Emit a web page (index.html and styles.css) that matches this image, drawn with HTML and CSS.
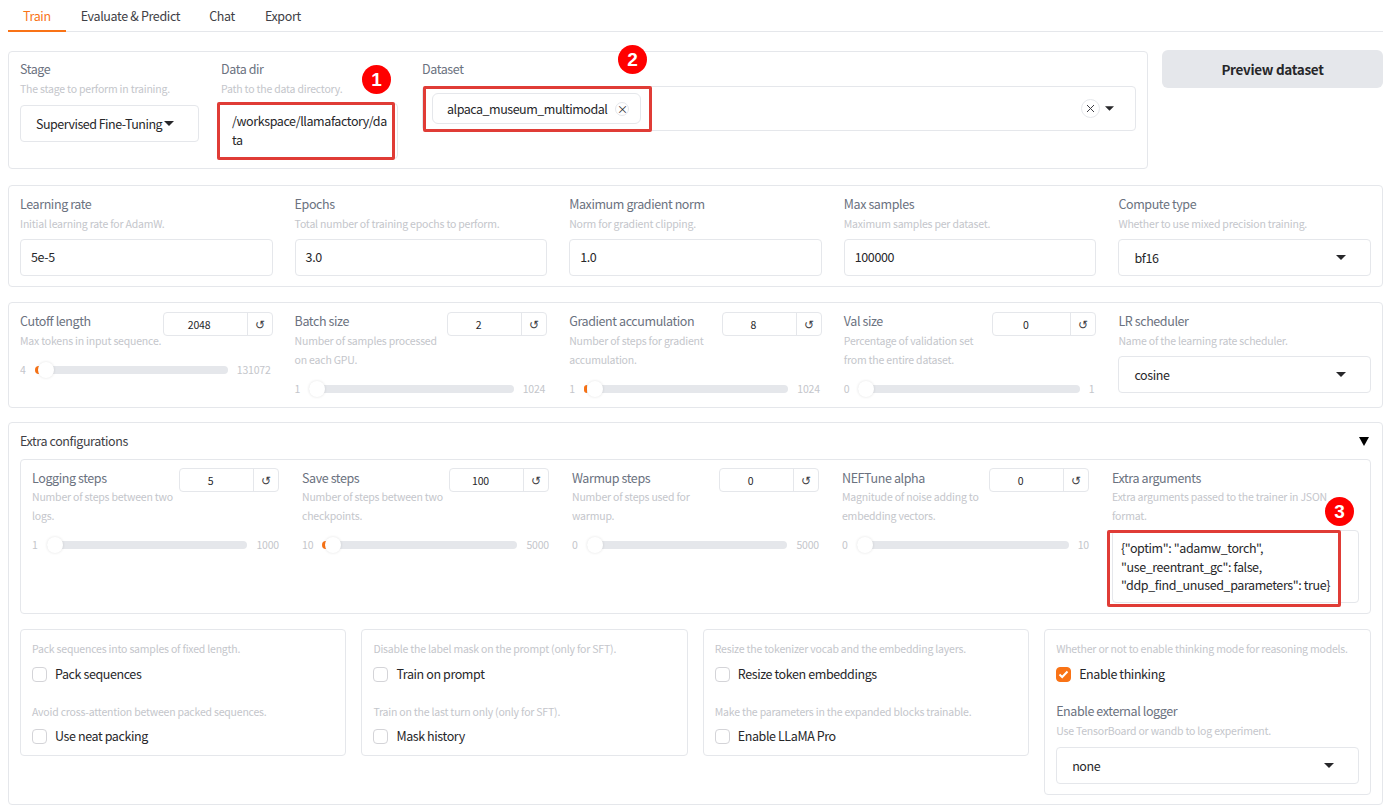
FILE: index.html
```html
<!DOCTYPE html>
<html lang="en">
  <head>
    <meta charset="UTF-8" />
    <meta name="viewport" content="width=device-width, initial-scale=1.0" />
    <title>LLaMA Factory</title>
    <link rel="stylesheet" href="styles.css">
  </head>
  <body>
    <div class="page">
      <nav class="tabs">
        <a class="tab active">Train</a>
        <a class="tab">Evaluate &amp; Predict</a>
        <a class="tab">Chat</a>
        <a class="tab">Export</a>
      </nav>

      <div class="top-row">
        <section class="panel top-panel">
          <div class="field stage-field">
            <label>Stage</label>
            <p class="info">The stage to perform in training.</p>
            <div class="box select stage-select">
              <span>Supervised Fine-Tuning</span>
              <svg class="caret" width="10" height="5" viewBox="0 0 10 5"><polygon points="0,0 10,0 5,5" /></svg>
            </div>
          </div>
          <div class="field dir-field">
            <label>Data dir</label>
            <p class="info">Path to the data directory.</p>
            <div class="box dir-box">/workspace/llamafactory/data</div>
          </div>
          <div class="field dataset-field">
            <label>Dataset</label>
            <div class="box dataset-box">
              <span class="chip">alpaca_museum_multimodal <i class="chip-x">×</i></span>
              <span class="clear-x">
                <svg width="9" height="9" viewBox="0 0 9 9"><path d="M1 1 L8 8 M8 1 L1 8" fill="none" stroke="#3f3f46" stroke-width="1" /></svg>
              </span>
              <svg class="caret" width="9" height="5" viewBox="0 0 10 5"><polygon points="0,0 10,0 5,5" /></svg>
            </div>
          </div>
        </section>
        <button class="preview-btn">Preview dataset</button>
      </div>

      <section class="panel five-cols row-two">
        <div class="field">
          <label>Learning rate</label>
          <p class="info">Initial learning rate for AdamW.</p>
          <div class="box text-box">5e-5</div>
        </div>
        <div class="field">
          <label>Epochs</label>
          <p class="info">Total number of training epochs to perform.</p>
          <div class="box text-box">3.0</div>
        </div>
        <div class="field">
          <label>Maximum gradient norm</label>
          <p class="info">Norm for gradient clipping.</p>
          <div class="box text-box">1.0</div>
        </div>
        <div class="field">
          <label>Max samples</label>
          <p class="info">Maximum samples per dataset.</p>
          <div class="box text-box">100000</div>
        </div>
        <div class="field">
          <label>Compute type</label>
          <p class="info">Whether to use mixed precision training.</p>
          <div class="box text-box select">
            <span>bf16</span>
            <svg class="caret" width="10" height="5" viewBox="0 0 10 5"><polygon points="0,0 10,0 5,5" /></svg>
          </div>
        </div>
      </section>

      <section class="panel five-cols row-three">
        <div class="field">
          <div class="slider-head">
            <div class="nowrap">
              <label>Cutoff length</label>
              <p class="info">Max tokens in input sequence.</p>
            </div>
            <div class="num num-wide"><span class="num-val">2048</span><span class="num-reset">↺</span></div>
          </div>
          <div class="slider">
            <span class="min">4</span>
            <div class="track"><b class="fill"></b><b class="thumb"></b></div>
            <span class="max">131072</span>
          </div>
        </div>
        <div class="field">
          <div class="slider-head">
            <div>
              <label>Batch size</label>
              <p class="info">Number of samples processed on each GPU.</p>
            </div>
            <div class="num"><span class="num-val">2</span><span class="num-reset">↺</span></div>
          </div>
          <div class="slider">
            <span class="min">1</span>
            <div class="track"><b class="thumb"></b></div>
            <span class="max">1024</span>
          </div>
        </div>
        <div class="field">
          <div class="slider-head">
            <div>
              <label>Gradient accumulation</label>
              <p class="info">Number of steps for gradient accumulation.</p>
            </div>
            <div class="num"><span class="num-val">8</span><span class="num-reset">↺</span></div>
          </div>
          <div class="slider">
            <span class="min">1</span>
            <div class="track"><b class="fill thin"></b><b class="thumb"></b></div>
            <span class="max">1024</span>
          </div>
        </div>
        <div class="field">
          <div class="slider-head">
            <div>
              <label>Val size</label>
              <p class="info">Percentage of validation set from the entire dataset.</p>
            </div>
            <div class="num num-mid"><span class="num-val">0</span><span class="num-reset">↺</span></div>
          </div>
          <div class="slider">
            <span class="min">0</span>
            <div class="track"><b class="thumb"></b></div>
            <span class="max">1</span>
          </div>
        </div>
        <div class="field">
          <label>LR scheduler</label>
          <p class="info">Name of the learning rate scheduler.</p>
          <div class="box text-box select">
            <span>cosine</span>
            <svg class="caret" width="10" height="5" viewBox="0 0 10 5"><polygon points="0,0 10,0 5,5" /></svg>
          </div>
        </div>
      </section>

      <section class="panel extra-panel">
        <div class="extra-head">
          <span>Extra configurations</span>
          <svg width="10" height="9" viewBox="0 0 10 9"><polygon points="0,0 10,0 5,9" /></svg>
        </div>
        <div class="inner five-inner">
          <div class="field">
            <div class="slider-head">
              <div>
                <label>Logging steps</label>
                <p class="info">Number of steps between two logs.</p>
              </div>
              <div class="num"><span class="num-val">5</span><span class="num-reset">↺</span></div>
            </div>
            <div class="slider">
              <span class="min">1</span>
              <div class="track"><b class="thumb"></b></div>
              <span class="max">1000</span>
            </div>
          </div>
          <div class="field">
            <div class="slider-head">
              <div>
                <label>Save steps</label>
                <p class="info">Number of steps between two checkpoints.</p>
              </div>
              <div class="num"><span class="num-val">100</span><span class="num-reset">↺</span></div>
            </div>
            <div class="slider">
              <span class="min">10</span>
              <div class="track"><b class="fill"></b><b class="thumb"></b></div>
              <span class="max">5000</span>
            </div>
          </div>
          <div class="field">
            <div class="slider-head">
              <div>
                <label>Warmup steps</label>
                <p class="info">Number of steps used for warmup.</p>
              </div>
              <div class="num"><span class="num-val">0</span><span class="num-reset">↺</span></div>
            </div>
            <div class="slider">
              <span class="min">0</span>
              <div class="track"><b class="thumb"></b></div>
              <span class="max">5000</span>
            </div>
          </div>
          <div class="field">
            <div class="slider-head">
              <div>
                <label>NEFTune alpha</label>
                <p class="info">Magnitude of noise adding to embedding vectors.</p>
              </div>
              <div class="num"><span class="num-val">0</span><span class="num-reset">↺</span></div>
            </div>
            <div class="slider">
              <span class="min">0</span>
              <div class="track"><b class="thumb"></b></div>
              <span class="max">10</span>
            </div>
          </div>
          <div class="field">
            <label>Extra arguments</label>
            <p class="info">Extra arguments passed to the trainer in JSON format.</p>
            <div class="box args-box">{"optim": "adamw_torch",<br>"use_reentrant_gc": false,<br>"ddp_find_unused_parameters": true}</div>
          </div>
        </div>

        <div class="check-row">
          <div class="inner check-group">
            <p class="info">Pack sequences into samples of fixed length.</p>
            <div class="check"><span class="tick"></span>Pack sequences</div>
            <p class="info second">Avoid cross-attention between packed sequences.</p>
            <div class="check last"><span class="tick"></span>Use neat packing</div>
          </div>
          <div class="inner check-group">
            <p class="info">Disable the label mask on the prompt (only for SFT).</p>
            <div class="check"><span class="tick"></span>Train on prompt</div>
            <p class="info second">Train on the last turn only (only for SFT).</p>
            <div class="check last"><span class="tick"></span>Mask history</div>
          </div>
          <div class="inner check-group">
            <p class="info">Resize the tokenizer vocab and the embedding layers.</p>
            <div class="check"><span class="tick"></span>Resize token embeddings</div>
            <p class="info second">Make the parameters in the expanded blocks trainable.</p>
            <div class="check last"><span class="tick"></span>Enable LLaMA Pro</div>
          </div>
          <div class="inner check-group">
            <p class="info">Whether or not to enable thinking mode for reasoning models.</p>
            <div class="check">
              <span class="tick on">
                <svg width="11" height="9" viewBox="0 0 11 9"><path d="M1.5 4.5 L4.2 7 L9.5 1.5" fill="none" stroke="#fff" stroke-width="2" /></svg>
              </span>Enable thinking
            </div>
            <label class="logger-label">Enable external logger</label>
            <p class="info">Use TensorBoard or wandb to log experiment.</p>
            <div class="box text-box select logger-select">
              <span>none</span>
              <svg class="caret" width="10" height="5" viewBox="0 0 10 5"><polygon points="0,0 10,0 5,5" /></svg>
            </div>
          </div>
        </div>
      </section>

      <!-- red callouts drawn over the form -->
      <div class="mark mark-1"></div>
      <div class="mark mark-2"></div>
      <div class="mark mark-3"></div>
      <span class="badge badge-1">1</span>
      <span class="badge badge-2">2</span>
      <span class="badge badge-3">3</span>
    </div>
  </body>
</html>
```

FILE: styles.css
```css
* {
  box-sizing: border-box;
}
body {
  margin: 0;
  background-color: #fff;
  color: #27272a;
  font-family: "Noto Sans CJK SC", "Noto Sans", sans-serif;
  font-size: 12.5px;
  letter-spacing: -0.4px;
  line-height: 20px;
}
.page {
  position: relative;
  height: 811px;
  padding: 0 17px 0 8px;
  overflow: hidden;
}
.tabs {
  display: flex;
  height: 32px;
  margin-bottom: 19px;
  border-bottom: 1px solid #e5e7eb;
}
.tab {
  height: 32px;
  padding: 6px 14.5px 0;
  color: #3f3f46;
  letter-spacing: -0.35px;
}
.tab:last-child {
  margin-left: 1px;
}
.active {
  padding: 6px 15.5px 0 15px;
  color: #f97316;
  border-bottom: 2px solid #f97316;
}
.panel {
  border: 1px solid #e5e7eb;
  border-radius: 4px;
  background: #fff;
  padding: 11px;
}
label {
  display: block;
  margin-bottom: 1px;
  color: #6b7280;
  line-height: 18px;
}
.info {
  margin: 0;
  color: #c4c6cb;
  font-size: 10.5px;
  letter-spacing: -0.2px;
  line-height: 19px;
}
.box {
  border: 1px solid #e5e7eb;
  border-radius: 4px;
  background: #fff;
  color: #27272a;
}

/* first row */
.top-row {
  display: flex;
  align-items: flex-start;
  gap: 14px;
  margin-bottom: 16px;
}
.top-panel {
  display: flex;
  gap: 22px;
  width: 1140px;
  height: 118px;
  padding-top: 8px;
  flex-shrink: 0;
}
.stage-field {
  width: 179px;
}
.dir-field {
  width: 178px;
  margin-right: 1px;
}
.dataset-field {
  flex: 1;
}
.stage-select {
  height: 37px;
  margin-top: 7px;
  padding: 0 15px;
  white-space: nowrap;
  letter-spacing: -0.5px;
}
.select {
  display: flex;
  align-items: center;
  justify-content: space-between;
}
.caret {
  fill: #27272a;
  flex-shrink: 0;
}
.stage-select .caret {
  margin-right: auto;
  margin-left: 2px;
}
.dir-box {
  height: 56px;
  margin: 5px 1px 0 -4px;
  padding: 7px 7px 0 14px;
  word-break: break-all;
  line-height: 19px;
}
.dataset-box {
  display: flex;
  align-items: center;
  height: 45px;
  margin-top: 8px;
  padding: 0 21px 0 9px;
}
.chip {
  display: flex;
  align-items: center;
  gap: 8px;
  height: 31px;
  padding: 0 11px 0 14px;
  border: 1px solid #e5e7eb;
  border-radius: 6px;
  margin-right: auto;
  letter-spacing: -0.48px;
}
.chip-x {
  width: 14px;
  height: 14px;
  border: 1px solid #e5e7eb;
  border-radius: 50%;
  font-style: normal;
  font-size: 11px;
  line-height: 12px;
  text-align: center;
}
.clear-x {
  display: flex;
  align-items: center;
  justify-content: center;
  width: 19px;
  height: 19px;
  margin-right: 5px;
  border: 1px solid #e5e7eb;
  border-radius: 50%;
}
.preview-btn {
  width: 221px;
  height: 38px;
  margin-top: -1px;
  border: none;
  border-radius: 6px;
  background-color: #e5e7eb;
  color: #27272a;
  font-family: inherit;
  font-size: 13.5px;
  font-weight: 700;
  letter-spacing: -0.3px;
}

/* five column rows */
.five-cols {
  display: grid;
  grid-template-columns: repeat(5, 1fr);
  column-gap: 22px;
}
.row-two {
  height: 102px;
  margin-bottom: 15px;
  padding-top: 9px;
}
.row-three {
  height: 106px;
  margin-bottom: 14px;
  padding-top: 9px;
}
.row-three .slider {
  padding-right: 2px;
}
.text-box {
  height: 37px;
  margin-top: 6px;
  padding: 0 10px;
  line-height: 33px;
}
.text-box.select {
  padding: 0 15px;
}
.text-box.select .caret {
  margin-right: 9px;
}
.slider-head {
  display: flex;
  align-items: flex-start;
  justify-content: space-between;
}
.nowrap {
  min-width: 0;
  white-space: nowrap;
}
.num {
  display: flex;
  flex-shrink: 0;
  width: 100px;
  height: 24px;
  border: 1px solid #e5e7eb;
  border-radius: 4px;
  font-size: 10.5px;
  letter-spacing: -0.2px;
  line-height: 24px;
  text-align: center;
}
.num-wide {
  width: 110px;
}
.num-mid {
  width: 104px;
}
.num-val {
  flex: 1;
  padding-right: 12px;
  color: #27272a;
}
.num-reset {
  width: 25px;
  border-left: 1px solid #e5e7eb;
  font-size: 12px;
  line-height: 21px;
  color: #3f3f46;
}
.slider {
  display: flex;
  align-items: center;
  gap: 9px;
  margin-top: 10px;
  color: #c4c6cb;
  font-size: 10.5px;
  letter-spacing: -0.2px;
}
.track {
  position: relative;
  flex: 1;
  height: 8px;
  border-radius: 4px;
  background-color: #e5e7eb;
}
.fill {
  position: absolute;
  left: 0;
  top: 0;
  width: 6px;
  height: 8px;
  border-radius: 4px 0 0 4px;
  background-color: #f97316;
}
.fill.thin {
  width: 3px;
}
.thumb {
  position: absolute;
  left: 0;
  top: -4px;
  width: 16px;
  height: 16px;
  border-radius: 50%;
  background: #fff;
  box-shadow: 0 0 3px rgba(0, 0, 0, 0.12);
}
.track:has(.fill) .thumb {
  left: 3px;
}

/* extra configurations */
.extra-panel {
  height: 383px;
  padding-top: 8px;
}
.extra-head {
  display: flex;
  align-items: center;
  justify-content: space-between;
  height: 20px;
  margin-bottom: 8px;
  padding-right: 2px;
  color: #3f3f46;
}
.inner {
  border: 1px solid #e5e7eb;
  border-radius: 4px;
  padding: 8px 11px;
}
.five-inner {
  display: grid;
  grid-template-columns: repeat(5, 1fr);
  column-gap: 23px;
  height: 155px;
  margin-bottom: 15px;
}
.five-inner label {
  margin-bottom: 0;
  line-height: 19px;
}
.args-box {
  height: 73px;
  margin-top: 5px;
  padding: 8px 0 0 8px;
  white-space: nowrap;
  line-height: 18.5px;
}
.check-row {
  display: grid;
  grid-template-columns: repeat(4, 1fr);
  column-gap: 15px;
  align-items: start;
  margin-right: 0.5px;
}
.check-group {
  height: 127px;
  padding-top: 9px;
}
.check-group:last-child {
  height: 166px;
}
.check {
  display: flex;
  align-items: center;
  gap: 8px;
  height: 20px;
  margin-top: 6px;
  color: #27272a;
}
.check.last {
  margin-top: 5px;
}
.tick {
  display: flex;
  align-items: center;
  justify-content: center;
  width: 15px;
  height: 15px;
  border: 1px solid #d4d4d8;
  border-radius: 4px;
  flex-shrink: 0;
}
.tick.on {
  border-color: #f97316;
  background-color: #f97316;
}
.second {
  margin-top: 18px;
}
.logger-label {
  margin-top: 18px;
}
.logger-select {
  height: 37px;
  margin-top: 7px;
}

/* callouts */
.mark {
  position: absolute;
  border: 3px solid #e03c36;
  border-radius: 2px;
}
.mark-1 {
  left: 217px;
  top: 102px;
  width: 178px;
  height: 58px;
}
.mark-2 {
  left: 423px;
  top: 86px;
  width: 229px;
  height: 46px;
}
.mark-3 {
  left: 1107px;
  top: 530px;
  width: 234px;
  height: 77px;
}
.badge {
  position: absolute;
  width: 29px;
  height: 29px;
  border-radius: 50%;
  background-color: #f00;
  color: #fff;
  font-family: "Liberation Sans", sans-serif;
  font-size: 19px;
  font-weight: 700;
  letter-spacing: 0;
  line-height: 29px;
  text-align: center;
}
.badge-1 {
  left: 362px;
  top: 65px;
}
.badge-2 {
  left: 618px;
  top: 45px;
}
.badge-3 {
  left: 1325px;
  top: 497px;
}
```
